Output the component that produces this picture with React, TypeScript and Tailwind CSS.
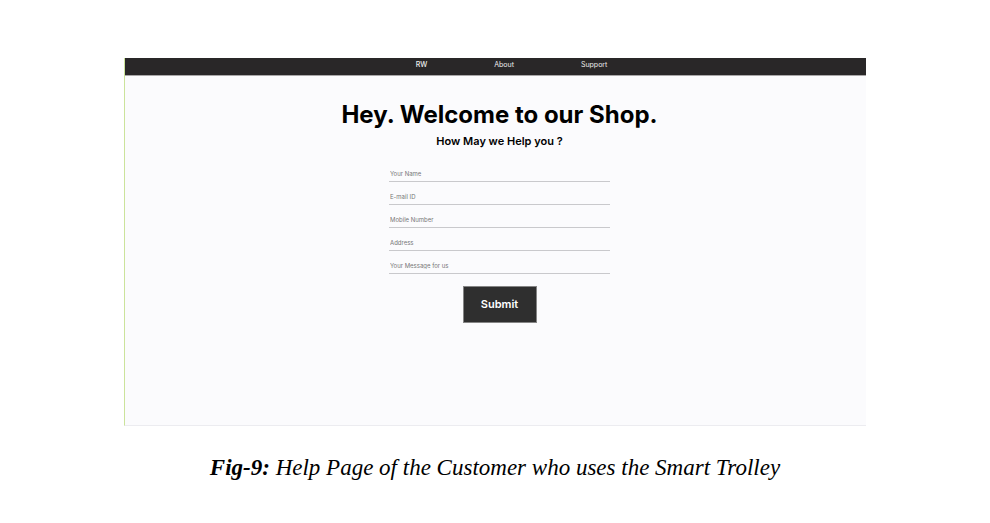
const links = ["RW", "About", "Support"];
const fields = [
  { id: "name", label: "Your Name", type: "text" },
  { id: "email", label: "E-mail ID", type: "email" },
  { id: "mobile", label: "Mobile Number", type: "tel" },
  { id: "address", label: "Address", type: "text" },
  { id: "message", label: "Your Message for us", type: "text" },
];

export default function App() {
  return (
    <main className="min-h-screen bg-white px-[12.5%] pt-[58px] pb-8">
      <figure className="w-full">
        <div className="min-h-[368px] border-b border-l border-b-[#ececf0] border-l-[#cbe39b] bg-[#fbfbfd] font-['Inter',sans-serif] text-black">
          <nav className="h-[18px] border-b border-[#a9a7a8] bg-[#292728] text-[7px] leading-[14px] text-[#ededed]">
            <ul className="flex justify-center gap-[67px] pl-8">
              {links.map((link) => (
                <li key={link}>
                  <a href="#" className={link === "RW" ? "font-medium" : ""}>{link}</a>
                </li>
              ))}
            </ul>
          </nav>
          <section className="flex flex-col items-center pt-[23px] pl-2">
            <h1 className="text-2xl leading-8 font-bold">Hey. Welcome to our Shop.</h1>
            <h2 className="mt-0.5 text-[11px] leading-4 font-semibold">How May we Help you ?</h2>
            <form className="mt-4 flex w-[221px] flex-col items-center" onSubmit={(e) => e.preventDefault()}>
              <div className="grid w-full gap-[6px]">
                {fields.map((f) => (
                  <input
                    key={f.id}
                    id={f.id}
                    type={f.type}
                    aria-label={f.label}
                    placeholder={f.label}
                    className="h-[17px] w-full border-b border-[#c9c9cc] pl-px text-[6px] outline-none placeholder:text-[#777]"
                  />
                ))}
              </div>
              <button type="submit" className="mt-3 h-[37px] w-[74px] border border-[#858585] bg-[#2f2f2f] text-[11px] font-semibold text-white">
                Submit
              </button>
            </form>
          </section>
        </div>
        <figcaption className="mt-6 text-center font-['Liberation_Serif',serif] text-[23px] leading-9 text-black italic">
          <strong>Fig-9:</strong> Help Page of the Customer who uses the Smart Trolley
        </figcaption>
      </figure>
    </main>
  );
}
